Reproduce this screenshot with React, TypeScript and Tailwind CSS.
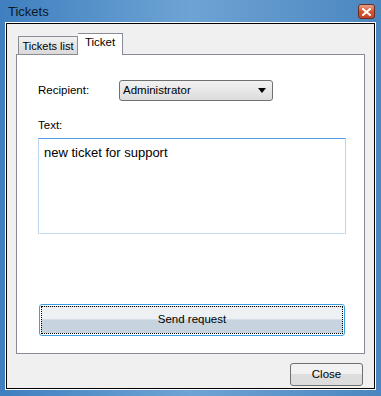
const font = { fontFamily: '"Liberation Sans", Arial, sans-serif' };

function CloseX() {
  return (
    <div className="w-[17px] h-[15px] rounded-[3px] border border-[#6b2b1f] bg-gradient-to-b from-[#e8a08c] via-[#d4552f] to-[#c6452a] flex items-center justify-center">
      <svg width="9" height="8" viewBox="0 0 9 8">
        <path d="M1 1 L8 7 M8 1 L1 7" stroke="#fff" strokeWidth="2" strokeLinecap="square" />
      </svg>
    </div>
  );
}

export default function App() {
  return (
    <div
      className="w-[381px] h-[396px] flex flex-col bg-gradient-to-r from-[#3f7fbf] via-[#6ea4d4] to-[#4b86c0] text-[11.5px] text-black"
      style={font}
    >
      {/* title */}
      <div className="h-[22px] flex items-center justify-between pl-[8px] pr-[6px] pt-[1px]">
        <span className="text-[13px] text-[#0b1a2a]">Tickets</span>
        <CloseX />
      </div>

      {/* client */}
      <div className="flex-1 mx-[5px] mb-[6px] border border-white">
        <div className="h-full border border-black bg-[#f0f0f0] flex flex-col px-[9px] pt-[8px]">
          {/* tabs */}
          <div className="flex items-end h-[22px] pl-[2px]">
            <div className="w-[60px] h-[18px] border border-b-0 border-[#898c95] bg-gradient-to-b from-[#f2f2f2] to-[#d9d9d9] flex items-center justify-center leading-none text-[11px] pt-[2px]">
              Tickets list
            </div>
            <div className="w-[45px] h-[22px] border border-b-0 border-l-0 border-[#898c95] bg-white flex items-center justify-center leading-none relative top-[1px] pb-[3px]">
              Ticket
            </div>
          </div>
          {/* panel */}
          <div className="h-[300px] border border-[#898c95] bg-white px-[21px] flex flex-col">
            <div className="flex items-center mt-[25px]">
              <span className="w-[81px]">Recipient:</span>
              <div className="w-[154px] h-[21px] rounded-[3px] border border-[#707070] bg-gradient-to-b from-[#f2f2f2] to-[#dcdcdc] flex items-center justify-between pl-[3px] pr-[6px]">
                <span>Administrator</span>
                <svg width="8" height="5" viewBox="0 0 8 5">
                  <path d="M0 0 H8 L4 5 Z" fill="#000" />
                </svg>
              </div>
            </div>
            <div className="mt-[19px] leading-none">Text:</div>
            <div className="mt-[6px] h-[96px] w-[308px] border border-[#5c9ad0] border-t-[#569de5] border-b-[#c5dcef] border-x-[#bcd5ec] px-[5px] pt-[4px] text-[13px]">
              new ticket for support
            </div>
            <div className="mt-[70px] h-[32px] w-[306px] rounded-[3px] border border-[#3c9ee3] p-[1px] ml-[1px]">
              <div className="h-full border border-dotted border-black bg-gradient-to-b from-[#edf1f4] from-45% to-[#c7d3de] to-50% flex items-center justify-center">
                Send request
              </div>
            </div>
          </div>
          {/* bottom */}
          <div className="flex justify-end mt-[9px] pr-[2px]">
            <div className="w-[73px] h-[23px] rounded-[3px] border border-[#707070] bg-gradient-to-b from-[#f2f2f2] from-45% to-[#dddddd] to-50% flex items-center justify-center">
              Close
            </div>
          </div>
        </div>
      </div>
    </div>
  );
}
